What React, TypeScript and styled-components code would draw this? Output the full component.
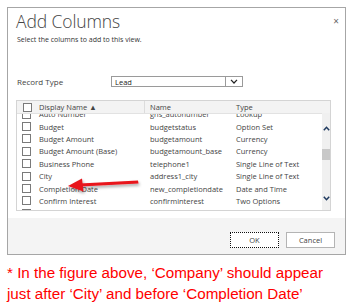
import React from "react";
import styled, { createGlobalStyle } from "styled-components";

const GlobalStyle = createGlobalStyle`
  html, body {
    margin: 0;
    padding: 0;
    background: #ffffff;
  }
  body {
    font-family: "Open Sans", "Noto Sans", sans-serif;
  }
`;

const Page = styled.div`
  width: 357px;
  height: 306px;
  padding: 7px 0 0 7px;
  box-sizing: border-box;
  overflow: hidden;
`;

const Dialog = styled.div`
  position: relative;
  width: 339px;
  height: 248px;
  border: 1px solid #a6a6a6;
  box-sizing: border-box;
  background: #ffffff;
  display: flex;
  flex-direction: column;
`;

const Body = styled.div`
  padding: 0 13px 0 8px;
  flex: 1;
`;

const TitleRow = styled.div`
  display: flex;
  justify-content: space-between;
  align-items: flex-start;
  height: 27px;
`;

const Title = styled.h1`
  margin: 3px 0 0 0;
  font-size: 17.5px;
  font-weight: 300;
  color: #444444;
  line-height: 20px;
  letter-spacing: -0.1px;
`;

const Close = styled.span`
  margin-top: 7px;
  margin-right: -7px;
  font-size: 10px;
  color: #666666;
  line-height: 12px;
`;

const Subtitle = styled.div`
  font-size: 7px;
  color: #333333;
  line-height: 10px;
  margin-left: 1px;
`;

const FieldRow = styled.div`
  display: flex;
  align-items: center;
  margin-top: 31px;
  height: 11px;
`;

const Label = styled.label`
  width: 94px;
  font-size: 8px;
  color: #444444;
  padding-left: 1px;
`;

const Select = styled.div`
  width: 132px;
  height: 11px;
  box-sizing: border-box;
  border: 1px solid #9a9a9a;
  display: flex;
  align-items: center;
  justify-content: space-between;
  font-size: 7.5px;
  color: #222222;
  padding-left: 3px;
`;

const SelectButton = styled.span`
  width: 16px;
  height: 9px;
  border-left: 1px solid #9a9a9a;
  display: flex;
  align-items: center;
  justify-content: center;
`;

const Table = styled.div`
  margin-top: 13px;
  width: 315px;
  height: 111px;
  box-sizing: border-box;
  border: 1px solid #d4d4d4;
  display: flex;
`;

const Grid = styled.div`
  flex: 1;
  display: flex;
  flex-direction: column;
  overflow: hidden;
`;

const HeaderRow = styled.div`
  display: grid;
  grid-template-columns: 19px 108px 89px 1fr;
  height: 12px;
  background: #f3f3f3;
  border-bottom: 1px solid #e2e2e2;
  position: relative;
  z-index: 1;
  align-items: center;
  font-size: 7.5px;
  color: #444444;
`;

const HeadCell = styled.div<{ $divider?: boolean }>`
  height: 100%;
  display: flex;
  align-items: center;
  padding-left: ${(p) => (p.$divider ? "5px" : "3px")};
  border-left: ${(p) => (p.$divider ? "1px solid #dcdcdc" : "none")};
  white-space: nowrap;
`;

const Rows = styled.div`
  flex: 1;
  overflow: hidden;
`;

const RowList = styled.div`
  margin-top: -6px;
`;

const Row = styled.div`
  display: grid;
  grid-template-columns: 19px 108px 89px 1fr;
  height: 12.4px;
  align-items: center;
  font-size: 7.5px;
  color: #444444;
  white-space: nowrap;
`;

const Cell = styled.div<{ $pad?: number }>`
  padding-left: ${(p) => p.$pad ?? 3}px;
  overflow: hidden;
`;

const Box = styled.span`
  display: block;
  width: 7px;
  height: 7px;
  border: 1px solid #7a7a7a;
  background: #ffffff;
  margin-left: 5px;
`;

const ScrollBar = styled.div`
  width: 8px;
  background: #f0f0f0;
  display: flex;
  flex-direction: column;
  align-items: center;
`;

const ScrollTop = styled.div`
  height: 12px;
  width: 100%;
  background: #f3f3f3;
`;

const Arrow = styled.div<{ $mt: number }>`
  margin-top: ${(p) => p.$mt}px;
  height: 6px;
  display: flex;
  align-items: center;
`;

const Thumb = styled.div`
  margin-top: 18px;
  width: 100%;
  height: 11px;
  background: #c8c8c8;
`;

const Footer = styled.div`
  height: 36px;
  background: #f4f4f4;
  display: flex;
  justify-content: flex-end;
  align-items: flex-start;
  gap: 7px;
  padding: 14px 10px 0 0;
  box-sizing: border-box;
`;

const Button = styled.button<{ $focus?: boolean }>`
  width: 49px;
  height: 16px;
  box-sizing: border-box;
  background: #ffffff;
  border: ${(p) => (p.$focus ? "1px dotted #111111" : "1px solid #b4b4b4")};
  outline: none;
  font-family: "Open Sans", "Noto Sans", sans-serif;
  font-size: 7.5px;
  color: #444444;
  padding: 0;
`;

const Note = styled.p`
  margin: 7px 0 0 0;
  font-family: "Liberation Sans", Arial, sans-serif;
  font-size: 15.2px;
  line-height: 21px;
  color: #ff0000;
  white-space: nowrap;
`;

const Pointer = styled.svg`
  position: absolute;
  left: 50px;
  top: 165px;
`;

const rows = [
  ["Auto Number", "gns_autonumber", "Lookup"],
  ["Budget", "budgetstatus", "Option Set"],
  ["Budget Amount", "budgetamount", "Currency"],
  ["Budget Amount (Base)", "budgetamount_base", "Currency"],
  ["Business Phone", "telephone1", "Single Line of Text"],
  ["City", "address1_city", "Single Line of Text"],
  ["Completion Date", "new_completiondate", "Date and Time"],
  ["Confirm Interest", "confirminterest", "Two Options"],
  ["Contact Method", "preferredcontact", "Single Line of Text"],
];

const Chevron = ({ up }: { up?: boolean }) => (
  <svg width="7" height="5" viewBox="0 0 7 5">
    <path
      d={up ? "M0.8 4.2 L3.5 1.3 L6.2 4.2" : "M0.8 0.8 L3.5 3.7 L6.2 0.8"}
      fill="none"
      stroke="#1f3a5f"
      strokeWidth="1.5"
    />
  </svg>
);

export default function App() {
  return (
    <>
      <GlobalStyle />
      <Page>
        <Dialog>
          <Body>
            <TitleRow>
              <Title>Add Columns</Title>
              <Close>×</Close>
            </TitleRow>
            <Subtitle>Select the columns to add to this view.</Subtitle>
            <FieldRow>
              <Label>Record Type</Label>
              <Select>
                Lead
                <SelectButton>
                  <svg width="8" height="5" viewBox="0 0 8 5">
                    <path d="M1 0.8 L4 4 L7 0.8" fill="none" stroke="#222" strokeWidth="1.2" />
                  </svg>
                </SelectButton>
              </Select>
            </FieldRow>
            <Table>
              <Grid>
                <HeaderRow>
                  <HeadCell>
                    <Box style={{ marginLeft: 3 }} />
                  </HeadCell>
                  <HeadCell>Display Name ▲</HeadCell>
                  <HeadCell $divider>Name</HeadCell>
                  <HeadCell>Type</HeadCell>
                </HeaderRow>
                <Rows>
                  <RowList>
                    {rows.map(([display, name, type]) => (
                      <Row key={name}>
                        <Cell $pad={0}>
                          <Box />
                        </Cell>
                        <Cell>{display}</Cell>
                        <Cell $pad={6}>{name}</Cell>
                        <Cell>{type}</Cell>
                      </Row>
                    ))}
                  </RowList>
                </Rows>
              </Grid>
              <ScrollBar>
                <ScrollTop />
                <Arrow $mt={12}>
                  <Chevron up />
                </Arrow>
                <Thumb />
                <Arrow $mt={35}>
                  <Chevron />
                </Arrow>
              </ScrollBar>
            </Table>
          </Body>
          <Footer>
            <Button $focus>OK</Button>
            <Button>Cancel</Button>
          </Footer>
          <Pointer width="90" height="30" viewBox="0 0 90 30">
            <defs>
              <filter id="sh" x="-20%" y="-50%" width="140%" height="200%">
                <feDropShadow dx="1" dy="2" stdDeviation="1.5" floodColor="#000" floodOpacity="0.35" />
              </filter>
            </defs>
            <g filter="url(#sh)">
              <path d="M80 7.5 L22 10.5 L22.4 13.5 L80.5 10.5 Z" fill="#e8141b" />
              <path d="M10 13 L24 5.5 L25.5 18.5 Z" fill="#e8141b" />
            </g>
          </Pointer>
        </Dialog>
        <Note>
          * In the figure above, ‘Company’ should appear
          <br />
          just after ‘City’ and before ‘Completion Date’
        </Note>
      </Page>
    </>
  );
}
